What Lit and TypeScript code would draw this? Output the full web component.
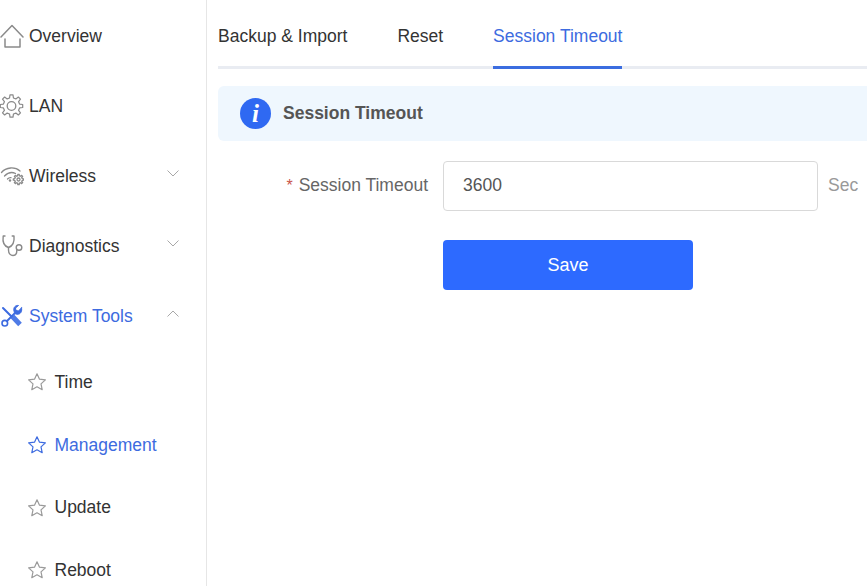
import { LitElement, html, css, svg } from "lit";
import { customElement } from "lit/decorators.js";

const G = "#8a8a8a";
const S = "#9a9a9a";
const B = "#3d6be0";

const ic = (body: unknown, color = G) => html`<svg class="ic" viewBox="0 0 24 24" width="24" height="24" fill="none" stroke=${color} stroke-width="1.4" stroke-linecap="round" stroke-linejoin="round">${body}</svg>`;

/** Closed outline of a toothed gear, as an SVG path. */
const gearPath = (cx: number, cy: number, rOut: number, rIn: number, teeth: number) => {
  const pts: string[] = [];
  const step = (Math.PI * 2) / teeth;
  for (let i = 0; i < teeth; i++) {
    const a = i * step - Math.PI / 2;
    const at = (off: number, r: number) =>
      `${(cx + Math.cos(a + off * step) * r).toFixed(2)} ${(cy + Math.sin(a + off * step) * r).toFixed(2)}`;
    pts.push(at(-0.3, rIn), at(-0.17, rOut), at(0.17, rOut), at(0.3, rIn));
  }
  return `M${pts.join("L")}Z`;
};

const home = ic(svg`<path d="M1 13 12 1.500 23 13" stroke-width="1.500"/><path d="M5 15v8h15v-8" stroke-width="1.500"/>`);
const gear = ic(svg`<path d=${gearPath(11.5, 12, 11.3, 8.3, 8)} stroke-width="1.200"/><circle cx="11.500" cy="12" r="4.300" stroke-width="1.300"/>`);
const wifi = ic(svg`<path d="M1.500 8.500C6 3 15 2.500 20 7" stroke-width="1.300"/><path d="M4.500 12C8 8.500 12.500 8 15.500 9.500" stroke-width="1.300"/><path d="M7.500 15c1-1 2.500-1.500 3.500-1.300" stroke-width="1.300"/><circle cx="10" cy="16.500" r="1.200" fill=${G} stroke="none"/><path d=${gearPath(18.5, 15.5, 5.2, 3.8, 8)} stroke-width="1.300"/><circle cx="18.500" cy="15.500" r="1.500" stroke-width="1.300"/>`);
const steth = ic(svg`<path d="M5 2H3.200C2.500 7 3.500 12 8.500 13.500 13 12 14.500 7 14 2h-1.800" stroke-width="1.400"/><path d="M8.500 13.500V16c0 3.500 2.200 5.500 4.500 5.500s3.800-2 3.800-5" stroke-width="1.400"/><circle cx="19" cy="13.500" r="2.800" stroke-width="1.400"/>`);
const tools = ic(svg`<path d="M3 4 12.500 13.500" stroke-width="2"/><path d="M12.500 12.500 20 20.500" stroke-width="5" stroke-linecap="butt" stroke="#4f7be6"/><path d="M7 17 14.500 9.500" stroke-width="1.800"/><path d="M21.500 3.800 18.500 7l-2.500-.5-.5-2.500L18.500 1.500C15.500 1 13 3.500 14 7c.2.800.5 1.500.5 2.500 1 .4 1.800.6 2.500.7 3.500.5 5.500-3 4.500-6.400z" fill=${B} stroke-width="1"/><circle cx="4.800" cy="19.200" r="2.800" stroke-width="1.600"/>`, B);

const star = (c: string) => html`<svg class="star" viewBox="0 0 20 20" width="20" height="20" fill="none" stroke=${c} stroke-width="1.200" stroke-linejoin="round"><path d="M10 1.800l2.500 5.400 5.900.7-4.400 4 1.200 5.800-5.200-2.900-5.200 2.900 1.200-5.800-4.400-4 5.900-.7z"/></svg>`;

const chev = (up: boolean, c: string) => html`<svg class="chev" viewBox="0 0 12 7" width="12" height="7" fill="none" stroke=${c} stroke-width="1"><path d=${up ? "M.5 6.500l5.500-5.500 5.500 5.500" : "M.5 .5l5.500 5.500 5.500-5.500"}/></svg>`;

@customElement("app-root")
export class AppRoot extends LitElement {
  static styles = css`
    :host { display: block; width: 867px; height: 586px; overflow: hidden; background: #fff; font-family: "Liberation Sans", Arial, sans-serif; font-size: 17.5px; color: #333; }
    .page { display: flex; height: 586px; }
    .side { width: 207px; box-sizing: border-box; flex: none; border-right: 1px solid #e6e6e6; display: flex; flex-direction: column; padding-top: 1px; overflow: hidden; }
    .item { height: 70px; flex: none; display: flex; align-items: center; gap: 5px; color: #333; position: relative; }
    .item.active { color: #3d6be0; }
    .ic { flex: none; }
    .chev { position: absolute; left: 167px; top: 29px; }
    .sub { height: 62.700px; flex: none; display: flex; align-items: center; padding-left: 27px; gap: 7.500px; color: #333; }
    .sub.active { color: #3d6be0; }
    .main { flex: 1; min-width: 0; padding-left: 11px; overflow: hidden; }
    .tabs { display: flex; gap: 50px; height: 69px; box-sizing: border-box; border-bottom: 3px solid #e9ecf2; padding-top: 26px; color: #333; }
    .tab { height: 43px; box-sizing: border-box; line-height: 21px; }
    .tab.on { color: #3d6be0; border-bottom: 3px solid #3b6de0; }
    .banner { margin-top: 17px; height: 55px; background: #eff7fe; border-radius: 6px 0 0 6px; display: flex; align-items: center; padding-left: 22px; gap: 12px; font-weight: 700; color: #555; }
    .info { width: 31px; height: 31px; border-radius: 50%; background: #2f69f2; color: #fff; display: flex; align-items: center; justify-content: center; font: italic 700 25px "Liberation Serif", serif; flex: none; }
    .row { margin-top: 20px; display: flex; align-items: center; height: 50px; }
    .label { width: 225px; text-align: right; padding: 0 15px 2px 0; box-sizing: border-box; color: #666; white-space: nowrap; }
    .label b { color: #c9544a; font-weight: 400; font-size: 16px; margin-right: 6px; }
    .input { width: 375px; height: 50px; box-sizing: border-box; border: 1px solid #d9d9d9; border-radius: 4px; padding: 0 19px 2px; display: flex; align-items: center; color: #555; flex: none; }
    .unit { margin-left: 10px; color: #999; padding-bottom: 2px; }
    .btn { margin: 29px 0 0 225px; width: 250px; height: 50px; background: #2d6aff; color: #fff; border-radius: 4px; font-size: 18px; display: flex; align-items: center; justify-content: center; }
  `;

  render() {
    return html`<div class="page">
      <nav class="side">
        <div class="item">${home}<span>Overview</span></div>
        <div class="item">${gear}<span>LAN</span></div>
        <div class="item">${wifi}<span>Wireless</span>${chev(false, "#a8a8a8")}</div>
        <div class="item">${steth}<span>Diagnostics</span>${chev(false, "#a8a8a8")}</div>
        <div class="item active">${tools}<span>System Tools</span>${chev(true, "#a8a8a8")}</div>
        <div class="sub">${star(S)}<span>Time</span></div>
        <div class="sub active">${star(B)}<span>Management</span></div>
        <div class="sub">${star(S)}<span>Update</span></div>
        <div class="sub">${star(S)}<span>Reboot</span></div>
      </nav>
      <main class="main">
        <div class="tabs">
          <div class="tab">Backup &amp; Import</div>
          <div class="tab">Reset</div>
          <div class="tab on">Session Timeout</div>
        </div>
        <div class="banner"><span class="info">i</span><span>Session Timeout</span></div>
        <div class="row">
          <div class="label"><b>*</b>Session Timeout</div>
          <div class="input">3600</div>
          <div class="unit">Sec</div>
        </div>
        <div class="btn">Save</div>
      </main>
    </div>`;
  }
}
